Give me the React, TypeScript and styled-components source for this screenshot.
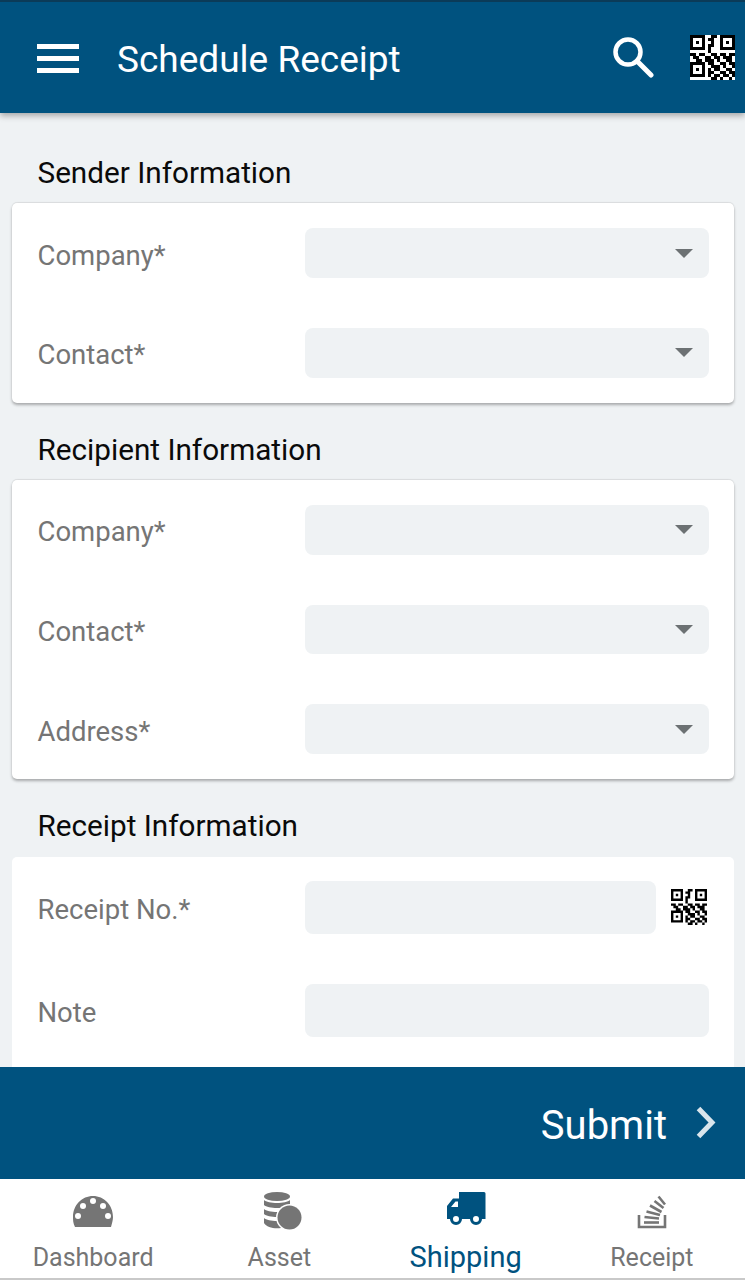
import React from 'react';
import styled, { createGlobalStyle } from 'styled-components';

const BLUE = '#00527f';
const GREY = '#757575';

const QR_ROWS = [
  '111110011011111',
  '100010110010001',
  '101010010010101',
  '100010110010001',
  '111110100011111',
  '000000100000000',
  '110110011011011',
  '011001101101110',
  '001101110100110',
  '111110110011011',
  '100010011101001',
  '101010101100110',
  '100010110011011',
  '111110101101101',
  '000000011010010',
];

const QrPath = QR_ROWS.map((row, y) =>
  row
    .split('')
    .map((cell, x) => (cell === '1' ? `M${x} ${y}h1v1h-1z` : ''))
    .join('')
).join('');

const SENDER_FIELDS = ['Company*', 'Contact*'];
const RECIPIENT_FIELDS = ['Company*', 'Contact*', 'Address*'];

const GlobalStyle = createGlobalStyle`
  html, body {
    margin: 0;
    padding: 0;
    background: #eff2f4;
  }
  * {
    box-sizing: border-box;
  }
`;

const Page = styled.div`
  width: 745px;
  height: 1280px;
  display: flex;
  flex-direction: column;
  overflow: hidden;
  font-family: Roboto, 'Liberation Sans', sans-serif;
  background: #eff2f4;
`;

const Header = styled.header`
  height: 113px;
  flex: none;
  display: flex;
  align-items: center;
  padding: 2px 10px 0 37px;
  background: ${BLUE};
  border-top: 2px solid #0b3b58;
  box-shadow: 0 3px 6px rgba(0, 0, 0, 0.3);
  position: relative;
  z-index: 1;
`;

const Burger = styled.div`
  width: 42px;
  height: 29px;
  display: flex;
  flex-direction: column;
  justify-content: space-between;

  span {
    display: block;
    height: 5px;
    background: #fff;
  }
`;

const Title = styled.h1`
  margin: 2px 0 0 38px;
  flex: 1;
  font-size: 37px;
  font-weight: 400;
  color: #fff;
  white-space: nowrap;
`;

const SearchIcon = styled.svg`
  width: 42px;
  height: 42px;
  margin-right: 36px;
  margin-top: -3px;
`;

const HeaderQr = styled.svg`
  width: 45px;
  height: 45px;
  background: #fff;
  margin-top: -2px;
`;

const Main = styled.main`
  flex: 1;
  min-height: 0;
  overflow: hidden;
  padding: 37px 11px 0 12px;
`;

const SectionTitle = styled.h2`
  margin: 0 0 10.2px 25.500px;
  height: 43px;
  line-height: 45px;
  font-size: 29.700px;
  font-weight: 400;
  color: #0a0a0a;
`;

const Card = styled.section`
  background: #fff;
  border-radius: 5px;
  padding: 25px 25px 25px 26px;
  margin-bottom: 24.3px;
  display: flex;
  flex-direction: column;
  gap: 50px;
  box-shadow: 0 2px 3px rgba(0, 0, 0, 0.3), 0 -1px 1px rgba(0, 0, 0, 0.08);
`;

const OpenCard = styled(Card)`
  box-shadow: none;
  border-radius: 5px 5px 0 0;
  padding-top: 24px;
  padding-bottom: 40px;
  margin-bottom: 0;
`;

const Row = styled.div`
  display: grid;
  grid-template-columns: 267px 1fr;
  align-items: center;
`;

const Label = styled.label`
  font-size: 27.5px;
  color: ${GREY};
  padding-top: 4px;
  margin-left: -0.500px;
`;

const Select = styled.div`
  height: 49.7px;
  background: #eff2f4;
  border-radius: 8px;
  display: flex;
  align-items: center;
  justify-content: flex-end;
  padding-right: 16px;
`;

const Caret = styled.span`
  width: 0;
  height: 0;
  border-left: 9px solid transparent;
  border-right: 9px solid transparent;
  border-top: 9px solid #6c7173;
`;

const Input = styled.div`
  height: 53px;
  background: #eff2f4;
  border-radius: 8px;
`;

const ScanRow = styled.div`
  display: flex;
  align-items: center;
  gap: 15px;
`;

const ScanInput = styled(Input)`
  flex: 1;
`;

const InlineQr = styled.svg`
  width: 36px;
  height: 36px;
  flex: none;
  margin-right: 2px;
`;

const SubmitBar = styled.div`
  height: 112px;
  flex: none;
  background: ${BLUE};
  color: #fff;
  display: flex;
  align-items: center;
  justify-content: flex-end;
  gap: 28px;
  padding-right: 28px;
  font-size: 40px;
`;

const SubmitLabel = styled.span`
  padding-top: 4px;
`;

const TabBar = styled.nav`
  height: 101px;
  flex: none;
  display: grid;
  grid-template-columns: repeat(4, 1fr);
  background: #fff;
  border-bottom: 2px solid #c9c9c9;
`;

const Tab = styled.div<{ $active?: boolean }>`
  display: flex;
  flex-direction: column;
  align-items: center;
  color: ${(p) => (p.$active ? BLUE : GREY)};
  font-size: ${(p) => (p.$active ? 29 : 25)}px;
  line-height: ${(p) => (p.$active ? 28 : 30)}px;
`;

const TabIconBox = styled.div<{ $top: number; $left?: number }>`
  height: 64px;
  display: flex;
  align-items: flex-start;
  justify-content: center;
  padding-top: ${(p) => p.$top}px;
  padding-left: ${(p) => p.$left || 0}px;
`;

function Field({ label }: { label: string }) {
  return (
    <Row>
      <Label>{label}</Label>
      <Select>
        <Caret />
      </Select>
    </Row>
  );
}

export default function App() {
  return (
    <Page>
      <GlobalStyle />
      <Header>
        <Burger>
          <span />
          <span />
          <span />
        </Burger>
        <Title>Schedule Receipt</Title>
        <SearchIcon viewBox="0 0 42 42" fill="none" stroke="#fff">
          <circle cx="16" cy="16" r="12.5" strokeWidth="4.5" />
          <path d="M25 25 L39 39" strokeWidth="5" strokeLinecap="round" />
        </SearchIcon>
        <HeaderQr viewBox="0 0 15 15" shapeRendering="crispEdges">
          <path d={QrPath} fill="#000" />
        </HeaderQr>
      </Header>
      <Main>
        <SectionTitle>Sender Information</SectionTitle>
        <Card>
          {SENDER_FIELDS.map((f) => (
            <Field key={f} label={f} />
          ))}
        </Card>
        <SectionTitle>Recipient Information</SectionTitle>
        <Card>
          {RECIPIENT_FIELDS.map((f) => (
            <Field key={f} label={f} />
          ))}
        </Card>
        <SectionTitle>Receipt Information</SectionTitle>
        <OpenCard>
          <Row>
            <Label>Receipt No.*</Label>
            <ScanRow>
              <ScanInput />
              <InlineQr viewBox="0 0 15 15">
                <path d={QrPath} fill="#000" />
              </InlineQr>
            </ScanRow>
          </Row>
          <Row>
            <Label>Note</Label>
            <Input />
          </Row>
        </OpenCard>
      </Main>
      <SubmitBar>
        <SubmitLabel>Submit</SubmitLabel>
        <svg width="22" height="34" viewBox="0 0 22 34" fill="none">
          <path d="M3.5 2.500 L17 16.500 L3.500 30.500" stroke="#d9e5ec" strokeWidth="5" />
        </svg>
      </SubmitBar>
      <TabBar>
        <Tab>
          <TabIconBox $top={17}>
            <svg width="40" height="32" viewBox="0 0 40 32">
              <path d="M2 31 C0 27 0 24 0 21 C0 9 9 0 20 0 C31 0 40 9 40 21 C40 24 39 27 38 31 Z" fill={GREY} />
              <g fill="#fff">
                <circle cx="5" cy="20" r="3" />
                <circle cx="10" cy="10" r="3" />
                <circle cx="20" cy="5" r="3" />
                <circle cx="30" cy="10" r="3" />
                <circle cx="35" cy="20" r="3" />
              </g>
            </svg>
          </TabIconBox>
          Dashboard
        </Tab>
        <Tab>
          <TabIconBox $top={13} $left={6}>
            <svg width="39" height="38" viewBox="0 0 39 38">
              <g fill={GREY}>
                <ellipse cx="14" cy="4.500" rx="13" ry="4.500" />
                <path d="M1 8 C5 12 23 12 27 8 V13 C23 17 5 17 1 13 Z" />
                <path d="M1 17 C5 21 23 21 27 17 V22 C23 26 5 26 1 22 Z" />
                <path d="M1 26 C5 30 23 30 27 26 V31 C23 38 5 38 1 31 Z" />
              </g>
              <circle cx="26.500" cy="25.500" r="13.500" fill="#fff" />
              <circle cx="26.500" cy="25.500" r="12" fill={GREY} />
            </svg>
          </TabIconBox>
          Asset
        </Tab>
        <Tab $active>
          <TabIconBox $top={13}>
            <svg width="40" height="33" viewBox="0 0 40 33">
              <path
                d="M13 0 H38 a1.500 1.500 0 0 1 1.500 1.500 V27 H1 V14 L7 6.500 H13 Z M5 15 H12 V9.500 H9.500 Z"
                fill={BLUE}
                fillRule="evenodd"
              />
              <circle cx="10" cy="27" r="4.500" fill="#fff" stroke={BLUE} strokeWidth="3" />
              <circle cx="30" cy="27" r="4.500" fill="#fff" stroke={BLUE} strokeWidth="3" />
            </svg>
          </TabIconBox>
          Shipping
        </Tab>
        <Tab>
          <TabIconBox $top={16} $left={1}>
            <svg width="30" height="34" viewBox="0 0 30 34" fill="none" stroke={GREY} strokeWidth="2.600">
              <path d="M2 20 V32 H28 V20" />
              <path d="M7 27.500 H22" />
              <path d="M7.500 22 L22 23.500" />
              <path d="M9.500 16.500 L23 20" />
              <path d="M13 10.500 L24.500 17" />
              <path d="M17.500 6 L26.500 13" />
              <path d="M21.500 1.500 L28 9.500" />
            </svg>
          </TabIconBox>
          Receipt
        </Tab>
      </TabBar>
    </Page>
  );
}
